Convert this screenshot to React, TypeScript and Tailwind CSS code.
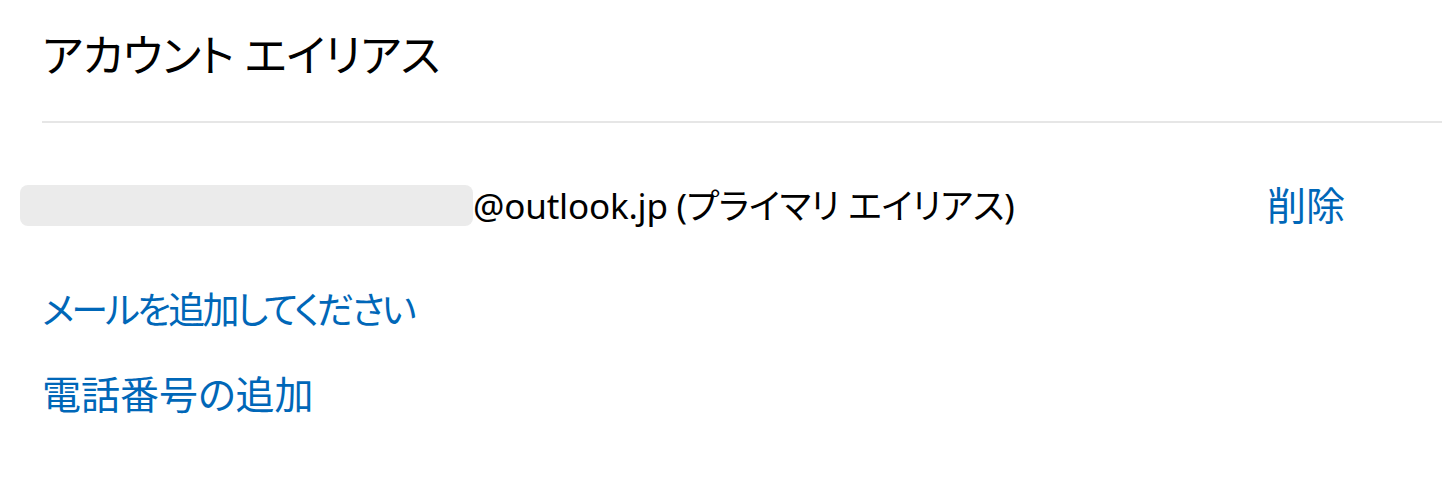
const font = "font-['Noto_Sans','Noto_Sans_CJK_JP',sans-serif] [font-feature-settings:'palt']";

const linkClass = "text-[#0067b8] hover:underline cursor-pointer";

export default function App() {
    return (
        <div className={`${font} bg-white w-[1442px] h-[486px] overflow-hidden pl-[42px] text-black`}>
            <h1 className="pt-[22px] h-[123px] text-[44px] leading-[66px] border-b-2 border-[#e6e6e6] tracking-[-0.5px]">
                アカウント エイリアス
            </h1>

            <div className="flex items-center justify-between h-[164px] pr-[97px]">
                <div className="flex items-center -ml-[22px]">
                    <div className="w-[453px] h-[41px] rounded-[8px] bg-[#ebebeb]" />
                    <span className="text-[35px] leading-[40px] mt-[2px] tracking-[-0.2px]">@outlook.jp (プライマリ エイリアス)</span>
                </div>
                <span className={`${linkClass} text-[39px] leading-[40px]`}>削除</span>
            </div>

            <div className="flex flex-col gap-[38px]">
                <span className={`${linkClass} text-[37px] leading-[46px] tracking-[-2.8px] w-fit`}>メールを追加してください</span>
                <span className={`${linkClass} text-[39px] leading-[46px] w-fit`}>電話番号の追加</span>
            </div>
        </div>
    );
}
